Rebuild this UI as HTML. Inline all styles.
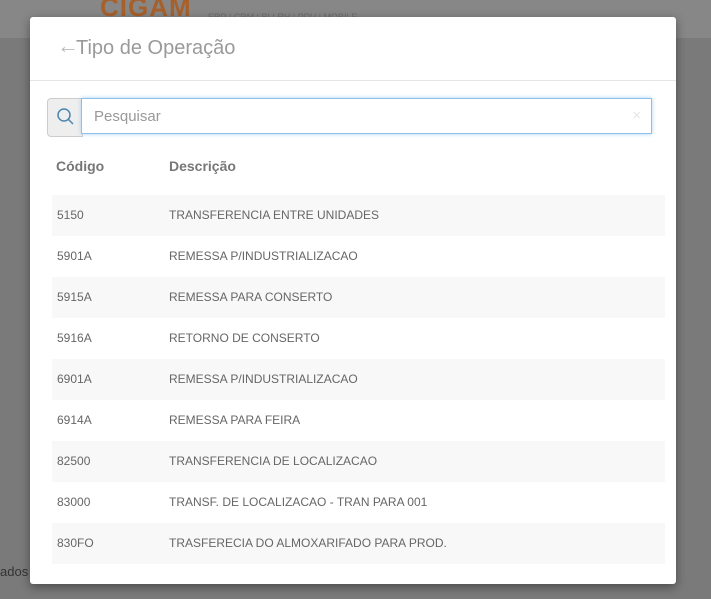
<!DOCTYPE html>
<html><head><meta charset="utf-8"><style>
body{margin:0;width:711px;height:599px;overflow:hidden;background:#7a7a7a;font-family:"Liberation Sans",sans-serif;position:relative}
.top{position:absolute;left:0;top:0;width:711px;height:38px;background:#878787}
.logo{position:absolute;left:100px;top:-8px;color:#a8602a;font-size:26px;font-weight:bold;letter-spacing:1px}
.sub{position:absolute;left:208px;top:12px;color:#6b6b6b;font-size:9px}
.ados{position:absolute;left:0;top:564px;color:#333;font-size:13px}
.modal{position:absolute;left:30px;top:17px;width:646px;height:567px;background:#fff;border-radius:3px;box-shadow:0 3px 10px rgba(0,0,0,.4)}
.hdr{height:63px;border-bottom:1px solid #e5e5e5;position:relative}
.hdr span{position:absolute;left:46px;top:20px;font-size:20px;color:#9a9a9a}
.hdr i{position:absolute;left:27px;top:16px;font-style:normal;font-size:22px;color:#bbb}
.sg{position:absolute;left:17px;top:81px;width:34px;height:37px;background:#eee;border:1px solid #ccc;border-radius:4px 0 0 4px}
.inp{position:absolute;left:51px;top:81px;width:569px;height:34px;border:1px solid #8fc0e8;box-shadow:0 0 4px #a9d1f2;background:#fff}
.inp span{position:absolute;left:12px;top:9px;color:#999;font-size:15px}
.inp b{position:absolute;right:10px;top:8px;color:#e5e5e5;font-weight:normal;font-size:15px}
.th{position:absolute;top:141px;font-weight:bold;color:#777;font-size:14px}
.rows{position:absolute;left:22px;top:178px;width:613px}
.r{height:41px;position:relative;font-size:12px;color:#666}
.r:nth-child(odd){background:#f8f8f8}
.r span{position:absolute;top:13px}
.c1{left:5px}.c2{left:117px}
</style></head><body>
<div class="top"></div>
<div class="logo">CIGAM</div>
<div class="sub">ERP | CRM | BI | RH | PDV | MOBILE</div>
<div class="ados">ados</div>
<div class="modal">
<div class="hdr"><i>←</i><span>Tipo de Operação</span></div>
<div class="sg"><svg width="34" height="37" viewBox="0 0 34 37"><circle cx="16" cy="16" r="6" fill="none" stroke="#4a86b0" stroke-width="1.5"/><line x1="20.5" y1="20.5" x2="25" y2="25" stroke="#4a86b0" stroke-width="1.5"/></svg></div>
<div class="inp"><span>Pesquisar</span><b>×</b></div>
<div class="th" style="left:26px">Código</div>
<div class="th" style="left:139px">Descrição</div>
<div class="rows">
<div class="r"><span class="c1">5150</span><span class="c2">TRANSFERENCIA ENTRE UNIDADES</span></div>
<div class="r"><span class="c1">5901A</span><span class="c2">REMESSA P/INDUSTRIALIZACAO</span></div>
<div class="r"><span class="c1">5915A</span><span class="c2">REMESSA PARA CONSERTO</span></div>
<div class="r"><span class="c1">5916A</span><span class="c2">RETORNO DE CONSERTO</span></div>
<div class="r"><span class="c1">6901A</span><span class="c2">REMESSA P/INDUSTRIALIZACAO</span></div>
<div class="r"><span class="c1">6914A</span><span class="c2">REMESSA PARA FEIRA</span></div>
<div class="r"><span class="c1">82500</span><span class="c2">TRANSFERENCIA DE LOCALIZACAO</span></div>
<div class="r"><span class="c1">83000</span><span class="c2">TRANSF. DE LOCALIZACAO - TRAN PARA 001</span></div>
<div class="r"><span class="c1">830FO</span><span class="c2">TRASFERECIA DO ALMOXARIFADO PARA PROD.</span></div>
</div>
</div>
</body></html>
